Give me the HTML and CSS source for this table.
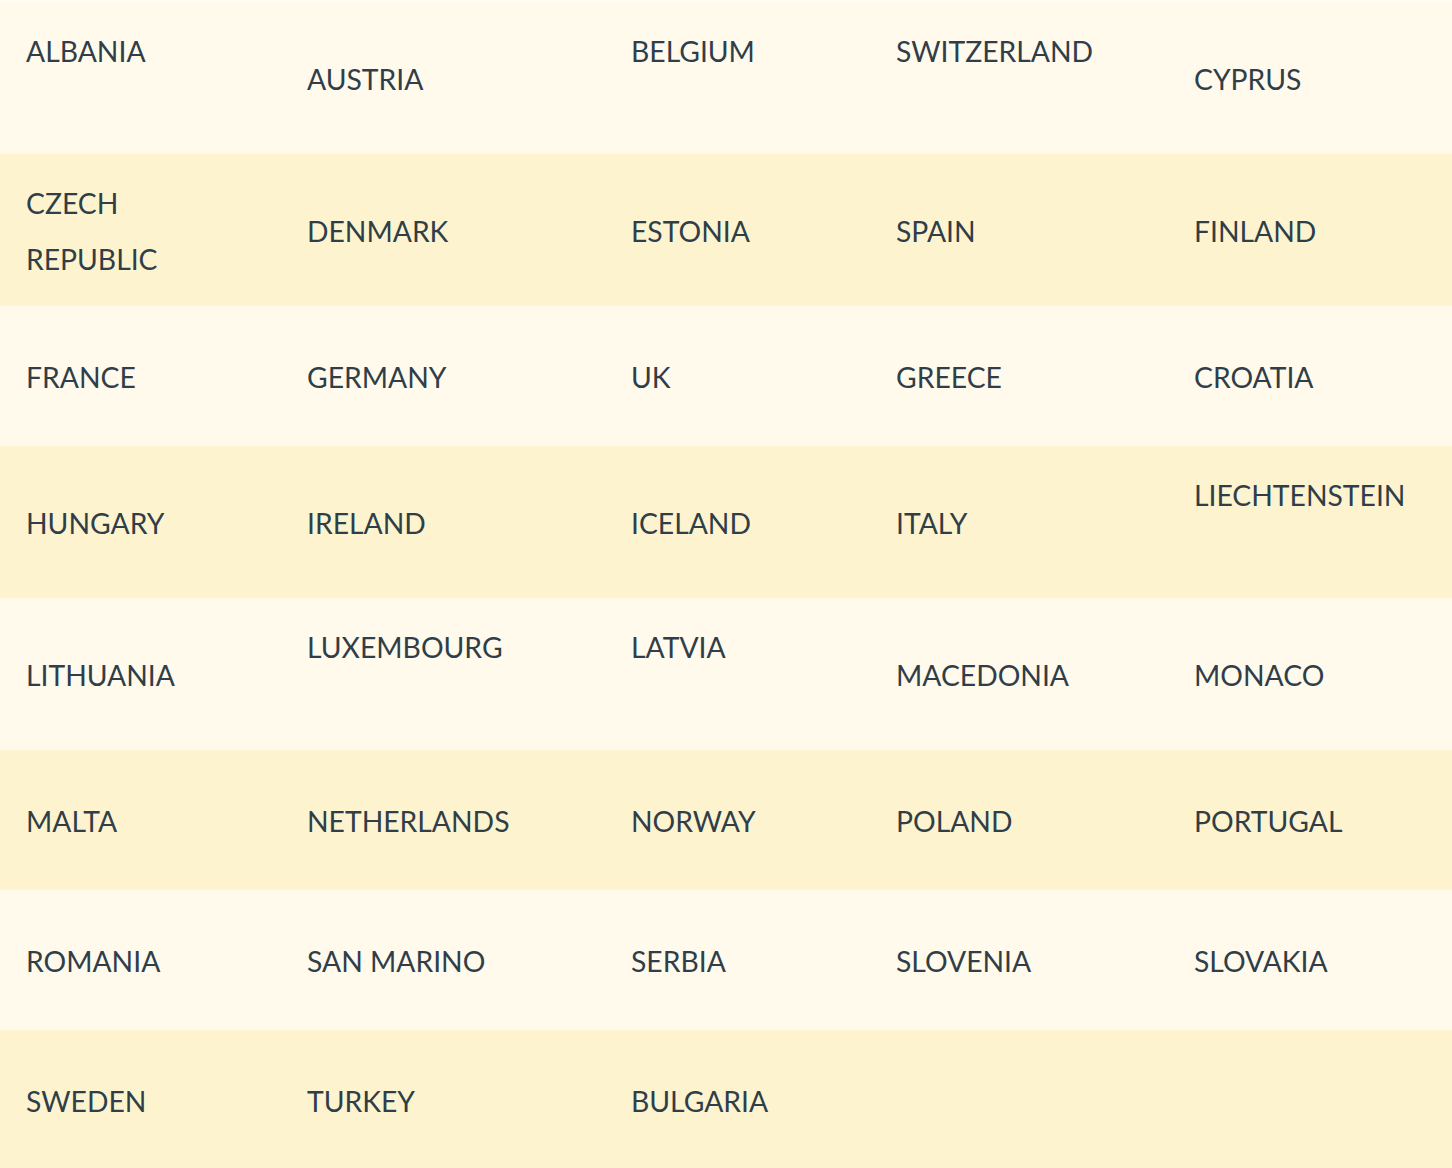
FILE: index.html
```html
<!DOCTYPE html>
<html lang="en">
<head>
<meta charset="utf-8">
<title>Countries</title>
<link rel="stylesheet" href="styles.css">
</head>
<body>
<table class="countries">
  <colgroup>
    <col class="c1"><col class="c2"><col class="c3"><col class="c4"><col class="c5">
  </colgroup>
  <tbody>
    <tr class="light">
      <td class="top">ALBANIA</td><td>AUSTRIA</td><td class="top">BELGIUM</td><td class="top">SWITZERLAND</td><td>CYPRUS</td>
    </tr>
    <tr class="dark">
      <td>CZECH<br>REPUBLIC</td><td>DENMARK</td><td>ESTONIA</td><td>SPAIN</td><td>FINLAND</td>
    </tr>
    <tr class="light">
      <td>FRANCE</td><td>GERMANY</td><td>UK</td><td>GREECE</td><td>CROATIA</td>
    </tr>
    <tr class="dark">
      <td>HUNGARY</td><td>IRELAND</td><td>ICELAND</td><td>ITALY</td><td class="top">LIECHTENSTEIN</td>
    </tr>
    <tr class="light">
      <td>LITHUANIA</td><td class="top">LUXEMBOURG</td><td class="top">LATVIA</td><td>MACEDONIA</td><td>MONACO</td>
    </tr>
    <tr class="dark">
      <td>MALTA</td><td>NETHERLANDS</td><td>NORWAY</td><td>POLAND</td><td>PORTUGAL</td>
    </tr>
    <tr class="light">
      <td>ROMANIA</td><td>SAN MARINO</td><td>SERBIA</td><td>SLOVENIA</td><td>SLOVAKIA</td>
    </tr>
    <tr class="dark">
      <td>SWEDEN</td><td>TURKEY</td><td>BULGARIA</td><td></td><td></td>
    </tr>
  </tbody>
</table>
</body>
</html>
```
FILE: styles.css
```css
html, body {
  margin: 0;
  padding: 0;
  background: #fffdf6;
}
body {
  padding-top: 2px;
}
.countries {
  width: 1452px;
  border-collapse: collapse;
  border-spacing: 0;
  table-layout: fixed;
  font-family: "Lato", "Open Sans", sans-serif;
  font-size: 28.3px;
  line-height: 56px;
  color: #2f3e48;
}
.c1 { width: 281px; }
.c2 { width: 324px; }
.c3 { width: 265px; }
.c4 { width: 298px; }
.c5 { width: 284px; }
.countries tr {
  height: 140px;
}
.countries td {
  padding: 21px 0 19px 26px;
  vertical-align: middle;
  white-space: nowrap;
}
.countries td.top::after {
  content: "";
  display: block;
  height: 56px;
}
.light { background: #fffaec; }
.dark { background: #fdf4cf; }
```
